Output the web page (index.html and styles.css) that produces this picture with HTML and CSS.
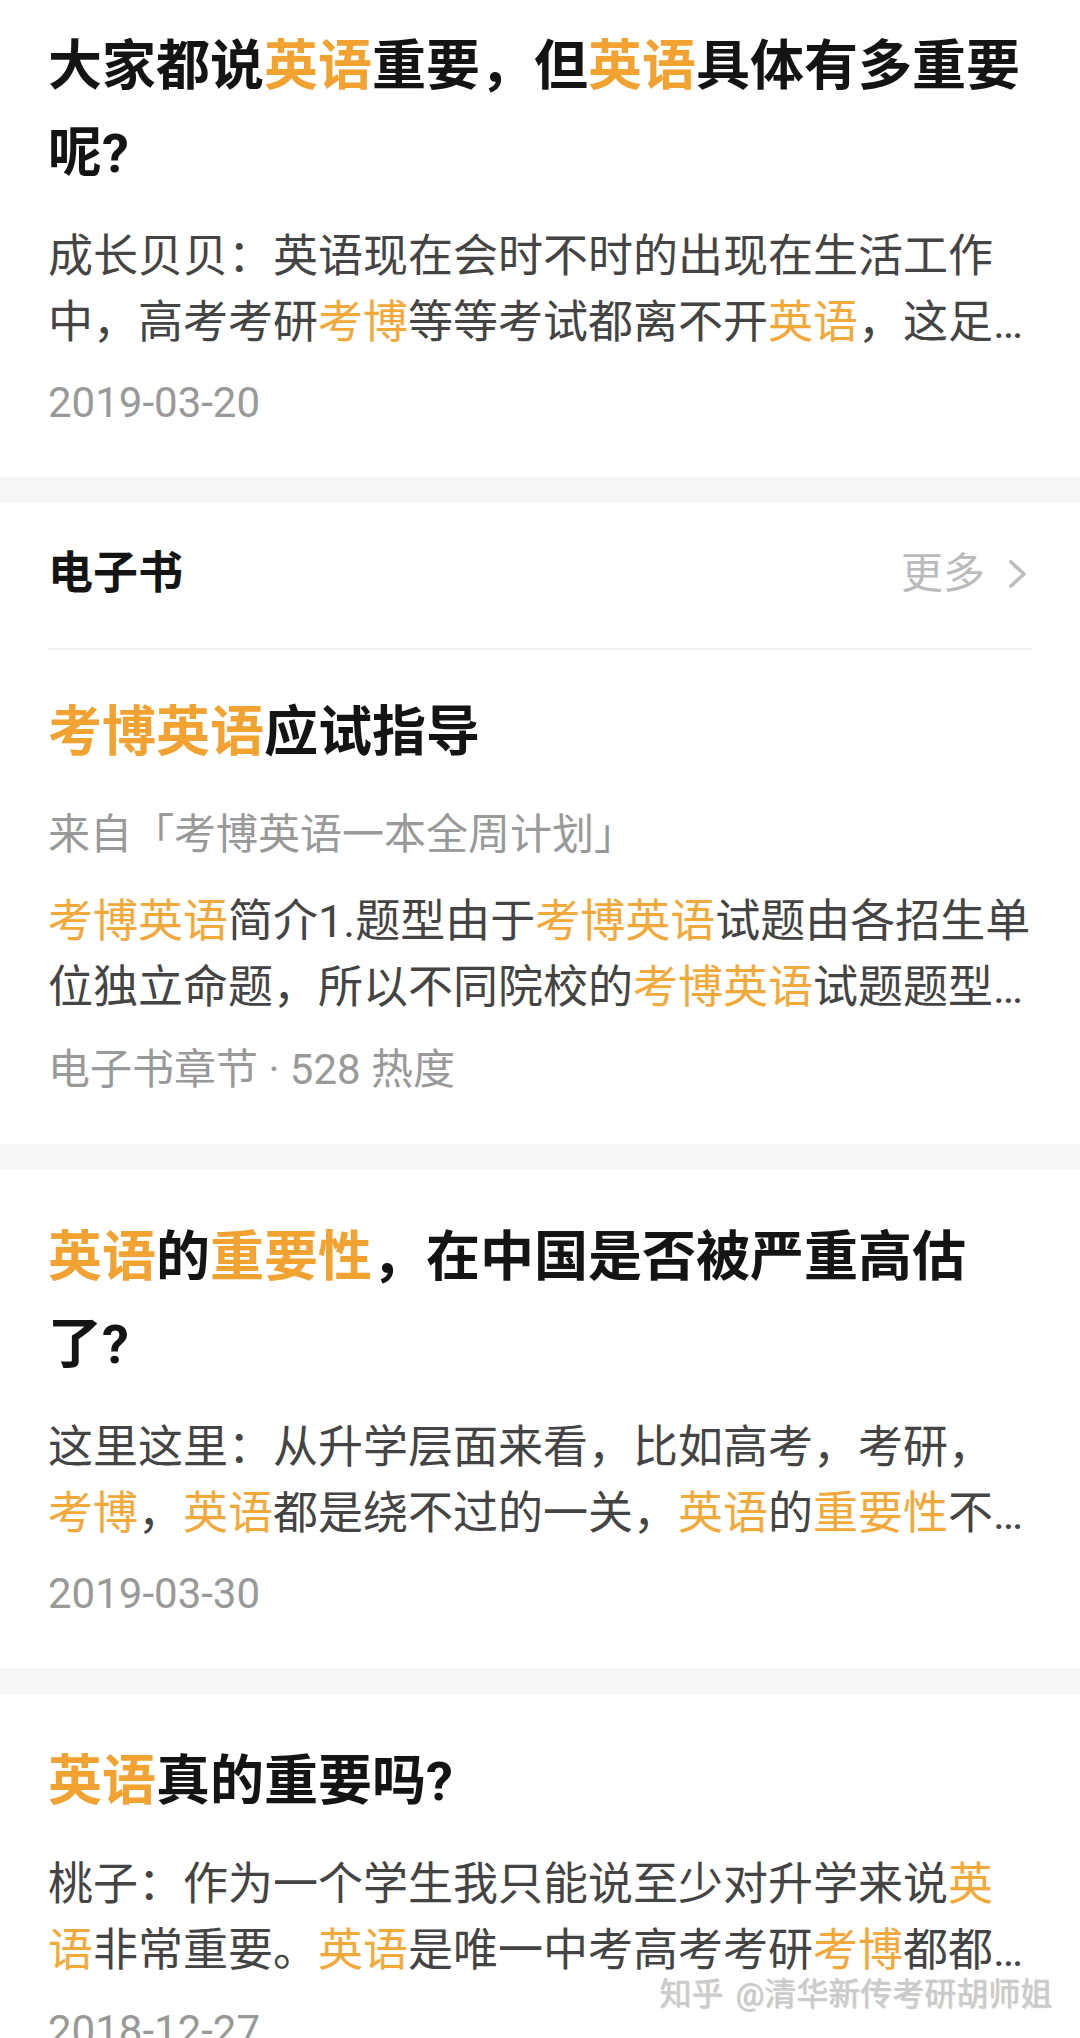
FILE: index.html
```html
<!DOCTYPE html>
<html lang="zh-CN">
<head>
<meta charset="utf-8">
<title>搜索结果</title>
<link rel="stylesheet" href="styles.css">
</head>
<body>
<main class="feed">
  <article class="card card--first">
    <h2 class="card__title">大家都说<span class="hl">英语</span>重要，但<span class="hl">英语</span>具体有多重要呢?</h2>
    <p class="card__excerpt">成长贝贝：英语现在会时不时的出现在生活工作中，高考考研<span class="hl">考博</span>等等考试都离不开<span class="hl">英语</span>，这足…</p>
    <p class="card__meta">2019-03-20</p>
  </article>

  <section class="card">
    <header class="section-head">
      <h3 class="section-head__name">电子书</h3>
      <span class="section-head__more">更多
        <svg class="chev" viewBox="0 0 22 32" width="22" height="32" aria-hidden="true"><path d="M4 4 L17 16 L4 28" fill="none" stroke="#bdbdbd" stroke-width="3.6" stroke-linecap="round" stroke-linejoin="round"/></svg>
      </span>
    </header>
    <h2 class="card__title card__title--book"><span class="hl">考博英语</span>应试指导</h2>
    <p class="card__source">来自「考博英语一本全周计划」</p>
    <p class="card__excerpt card__excerpt--book"><span class="hl">考博英语</span>简介1.题型由于<span class="hl">考博英语</span>试题由各招生单位独立命题，所以不同院校的<span class="hl">考博英语</span>试题题型…</p>
    <p class="card__meta card__meta--book">电子书章节 · 528 热度</p>
  </section>

  <article class="card">
    <h2 class="card__title"><span class="hl">英语</span>的<span class="hl">重要性</span>，在中国是否被严重高估了?</h2>
    <p class="card__excerpt">这里这里：从升学层面来看，比如高考，考研，<span class="hl">考博</span>，<span class="hl">英语</span>都是绕不过的一关，<span class="hl">英语</span>的<span class="hl">重要性</span>不…</p>
    <p class="card__meta">2019-03-30</p>
  </article>

  <article class="card">
    <h2 class="card__title"><span class="hl">英语</span>真的重要吗?</h2>
    <p class="card__excerpt">桃子：作为一个学生我只能说至少对升学来说<span class="hl">英语</span>非常重要。<span class="hl">英语</span>是唯一中考高考考研<span class="hl">考博</span>都都…</p>
    <p class="card__meta">2018-12-27</p>
  </article>

  <div class="watermark">知乎 @清华新传考研胡师姐</div>
</main>
</body>
</html>
```

FILE: styles.css
```css
html, body {
  margin: 0;
  padding: 0;
  background: #ffffff;
}

body {
  width: 1080px;
  height: 2038px;
  overflow: hidden;
  font-family: "Roboto", "Noto Sans CJK SC", "Noto Sans", sans-serif;
  color: #1a1a1a;
}

.feed {
  position: relative;
  display: flex;
  flex-direction: column;
  gap: 26px;
  background: #f6f6f6;
}

.card {
  background: #ffffff;
  padding: 44px 44px 46px 48px;
  display: flex;
  flex-direction: column;
}

.card--first {
  padding-top: 23px;
}

.hl {
  color: #f2a230;
}

.card__title {
  margin: 0;
  font-size: 54px;
  line-height: 87px;
  font-weight: 700;
  color: #141414;
}

.card__title--book {
  margin-top: 39px;
}

.card__excerpt {
  margin: 27px 0 0;
  font-size: 45px;
  line-height: 66px;
  font-weight: 400;
  color: #444444;
}

.card__excerpt .hl {
  color: #f3a93a;
}

.card__excerpt--book {
  margin-top: 26px;
}

.card__source {
  margin: 31px 0 0;
  font-size: 42px;
  line-height: 56px;
  color: #999999;
}

.card__meta {
  margin: 19px 0 0;
  font-size: 42px;
  line-height: 56px;
  color: #999999;
}

.card__meta--book {
  margin-top: 21px;
}

/* section header */
.section-head {
  display: flex;
  align-items: center;
  justify-content: space-between;
  margin-top: -3px;
  padding-bottom: 44px;
  border-bottom: 2px solid #f2f2f2;
  margin-right: 4px;
}

.section-head__name {
  margin: 0;
  font-size: 45px;
  line-height: 60px;
  font-weight: 700;
  color: #141414;
}

.section-head__more {
  display: flex;
  align-items: center;
  gap: 22px;
  font-size: 42px;
  line-height: 60px;
  color: #bbbbbb;
}

.chev {
  display: block;
  margin-right: 3px;
}

.watermark {
  position: absolute;
  top: 1974px;
  right: 28px;
  font-size: 32px;
  line-height: 40px;
  word-spacing: 4px;
  color: #cbcbcb;
  text-shadow: 1px 1px 1px rgba(0, 0, 0, 0.2), -1px -1px 0 rgba(255, 255, 255, 0.9);
  white-space: nowrap;
}
```
